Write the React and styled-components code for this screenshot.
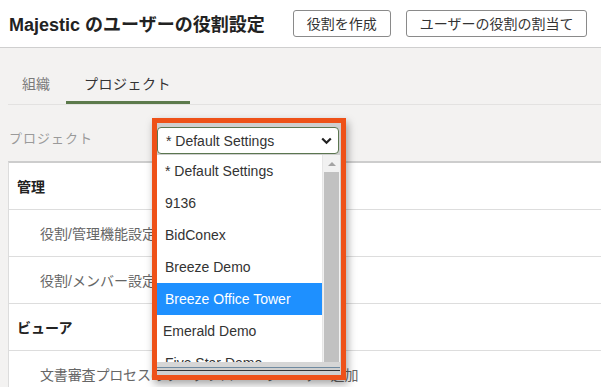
import React from "react";
import styled, { createGlobalStyle } from "styled-components";

const FONT = `"Liberation Sans", Arial, "Noto Sans CJK JP", sans-serif`;

const Global = createGlobalStyle`
  html, body { margin: 0; padding: 0; }
  body {
    background: #f3f2f1;
    font-family: ${FONT};
    color: #333;
    overflow: hidden;
  }
  * { box-sizing: border-box; }
`;

const Page = styled.div`
  width: 601px;
  height: 387px;
  overflow: hidden;
`;

const Header = styled.header`
  height: 48px;
  background: #fff;
  border-bottom: 1px solid #cfcfcf;
  display: flex;
  align-items: center;
  padding: 0 0 1px 9px;
`;

const Title = styled.h1`
  margin: 0;
  font-size: 18px;
  font-weight: bold;
  color: #222;
  white-space: nowrap;
`;

const Actions = styled.div`
  display: flex;
  gap: 15px;
  margin-left: 28px;
`;

const Button = styled.button`
  height: 27px;
  padding: 0 13px;
  font-family: ${FONT};
  font-size: 14px;
  color: #333;
  background: #fff;
  border: 1px solid #8a8a8a;
  border-radius: 3px;
  white-space: nowrap;
`;

const Main = styled.main`
  padding: 0 0 0 8px;
`;

const TabBar = styled.div`
  display: flex;
  padding-top: 16px;
  border-bottom: 1px solid #e3e2e1;
`;

const Tab = styled.div`
  height: 40px;
  display: flex;
  align-items: center;
  padding-left: ${(p) => (p.$first ? "14px" : "18px")};
  padding-right: ${(p) => (p.$first ? "16px" : "19px")};
  font-size: 14px;
  letter-spacing: ${(p) => (p.$active ? "0.5px" : "0")};
  color: ${(p) => (p.$active ? "#333" : "#7a7a7a")};
  border-bottom: 3px solid ${(p) => (p.$active ? "#5c7a4c" : "transparent")};
`;

const FieldRow = styled.div`
  display: flex;
  align-items: center;
  margin-top: 22px;
  height: 27px;
`;

const FieldLabel = styled.span`
  width: 149px;
  padding-left: 1px;
  font-size: 13px;
  letter-spacing: 1px;
  color: #9a9a9a;
  margin-top: -6px;
`;

const SelectWrap = styled.div`
  position: relative;
  width: 182px;
  height: 27px;
`;

const Annotation = styled.div`
  position: absolute;
  left: -5px;
  top: -9px;
  width: 194px;
  height: 262px;
  border: 5px solid #ee5118;
  background: #cfcfcf;
  box-shadow: 2px 4px 8px rgba(0, 0, 0, 0.35);
  z-index: 1;
`;

const SelectBox = styled.div`
  position: relative;
  z-index: 2;
  height: 27px;
  display: flex;
  align-items: center;
  justify-content: space-between;
  padding: 0 6px 0 8px;
  background: #fff;
  border: 1px solid #5b7650;
  border-radius: 4px;
  font-size: 14px;
  color: #333;
`;

const List = styled.div`
  position: absolute;
  z-index: 2;
  left: 0;
  top: 28px;
  width: 183px;
  height: 207px;
  background: #fff;
  display: flex;
  overflow: hidden;
`;

const Options = styled.div`
  flex: 1;
  display: flex;
  flex-direction: column;
`;

const Option = styled.div`
  flex: 0 0 32px;
  display: flex;
  align-items: center;
  padding-left: ${(p) => (p.$shift ? "6px" : "8px")};
  font-size: 14px;
  white-space: nowrap;
  color: ${(p) => (p.$selected ? "#fff" : "#333")};
  background: ${(p) => (p.$selected ? "#1e90ff" : "#fff")};
`;

const ScrollTrack = styled.div`
  width: 18px;
  background: #f1f1f1;
  border-left: 1px solid #e6e6e6;
  display: flex;
  flex-direction: column;
  align-items: center;
`;

const ArrowUp = styled.div`
  margin-top: 7px;
  width: 0;
  height: 0;
  border-left: 4px solid transparent;
  border-right: 4px solid transparent;
  border-bottom: 4px solid #a3a3a3;
`;

const Thumb = styled.div`
  margin-top: 6px;
  width: 15px;
  flex: 1;
  background: #c1c1c1;
`;

const BottomBand = styled.div`
  position: absolute;
  z-index: 2;
  left: 0;
  top: 235px;
  width: 183px;
  height: 5px;
  background: #d6d6d6;
`;

const Glitch = styled.div`
  position: absolute;
  z-index: 2;
  left: 0;
  top: 240px;
  width: 183px;
  height: 4px;
  border-top: 1px solid #6f8aa0;
  border-bottom: 1px solid #333;
  background: #cfcfcf;
`;

const Card = styled.section`
  margin-top: 7px;
  background: #fff;
  border-top: 2px solid #cdcdcd;
  border-left: 1px solid #dcdcdc;
`;

const Row = styled.div`
  height: 47px;
  display: flex;
  align-items: center;
  border-bottom: 1px solid #dddddd;
  padding-left: ${(p) => (p.$sub ? "31px" : "8px")};
  font-size: 14px;
  letter-spacing: ${(p) => (p.$tight ? "-0.15px" : "0")};
  font-weight: ${(p) => (p.$sub ? "normal" : "bold")};
  color: ${(p) => (p.$sub ? "#666" : "#222")};
  white-space: nowrap;
`;

const Chevron = () => (
  <svg width="11" height="8" viewBox="0 0 11 8" aria-hidden="true">
    <polyline points="1.2,1.5 5.5,5.8 9.8,1.5" fill="none" stroke="#222" strokeWidth="2.2" />
  </svg>
);

const projects = [
  "* Default Settings",
  "9136",
  "BidConex",
  "Breeze Demo",
  "Breeze Office Tower",
  "Emerald Demo",
  "Five Star Demo",
];

export default function App() {
  return (
    <Page>
      <Global />
      <Header>
        <Title>Majestic のユーザーの役割設定</Title>
        <Actions>
          <Button>役割を作成</Button>
          <Button>ユーザーの役割の割当て</Button>
        </Actions>
      </Header>
      <Main>
        <TabBar>
          <Tab $first>組織</Tab>
          <Tab $active>プロジェクト</Tab>
        </TabBar>
        <FieldRow>
          <FieldLabel>プロジェクト</FieldLabel>
          <SelectWrap>
            <Annotation />
            <SelectBox>
              <span>* Default Settings</span>
              <Chevron />
            </SelectBox>
            <List>
              <Options>
                {projects.map((p) => (
                  <Option key={p} $selected={p === "Breeze Office Tower"} $shift={p === "Emerald Demo"}>
                    {p}
                  </Option>
                ))}
              </Options>
              <ScrollTrack>
                <ArrowUp />
                <Thumb />
              </ScrollTrack>
            </List>
            <BottomBand />
            <Glitch />
          </SelectWrap>
        </FieldRow>
        <Card>
          <Row>管理</Row>
          <Row $sub>役割/管理機能設定</Row>
          <Row $sub>役割/メンバー設定</Row>
          <Row>ビューア</Row>
          <Row $sub $tight>文書審査プロセスのワークフローへのユーザー追加</Row>
        </Card>
      </Main>
    </Page>
  );
}
